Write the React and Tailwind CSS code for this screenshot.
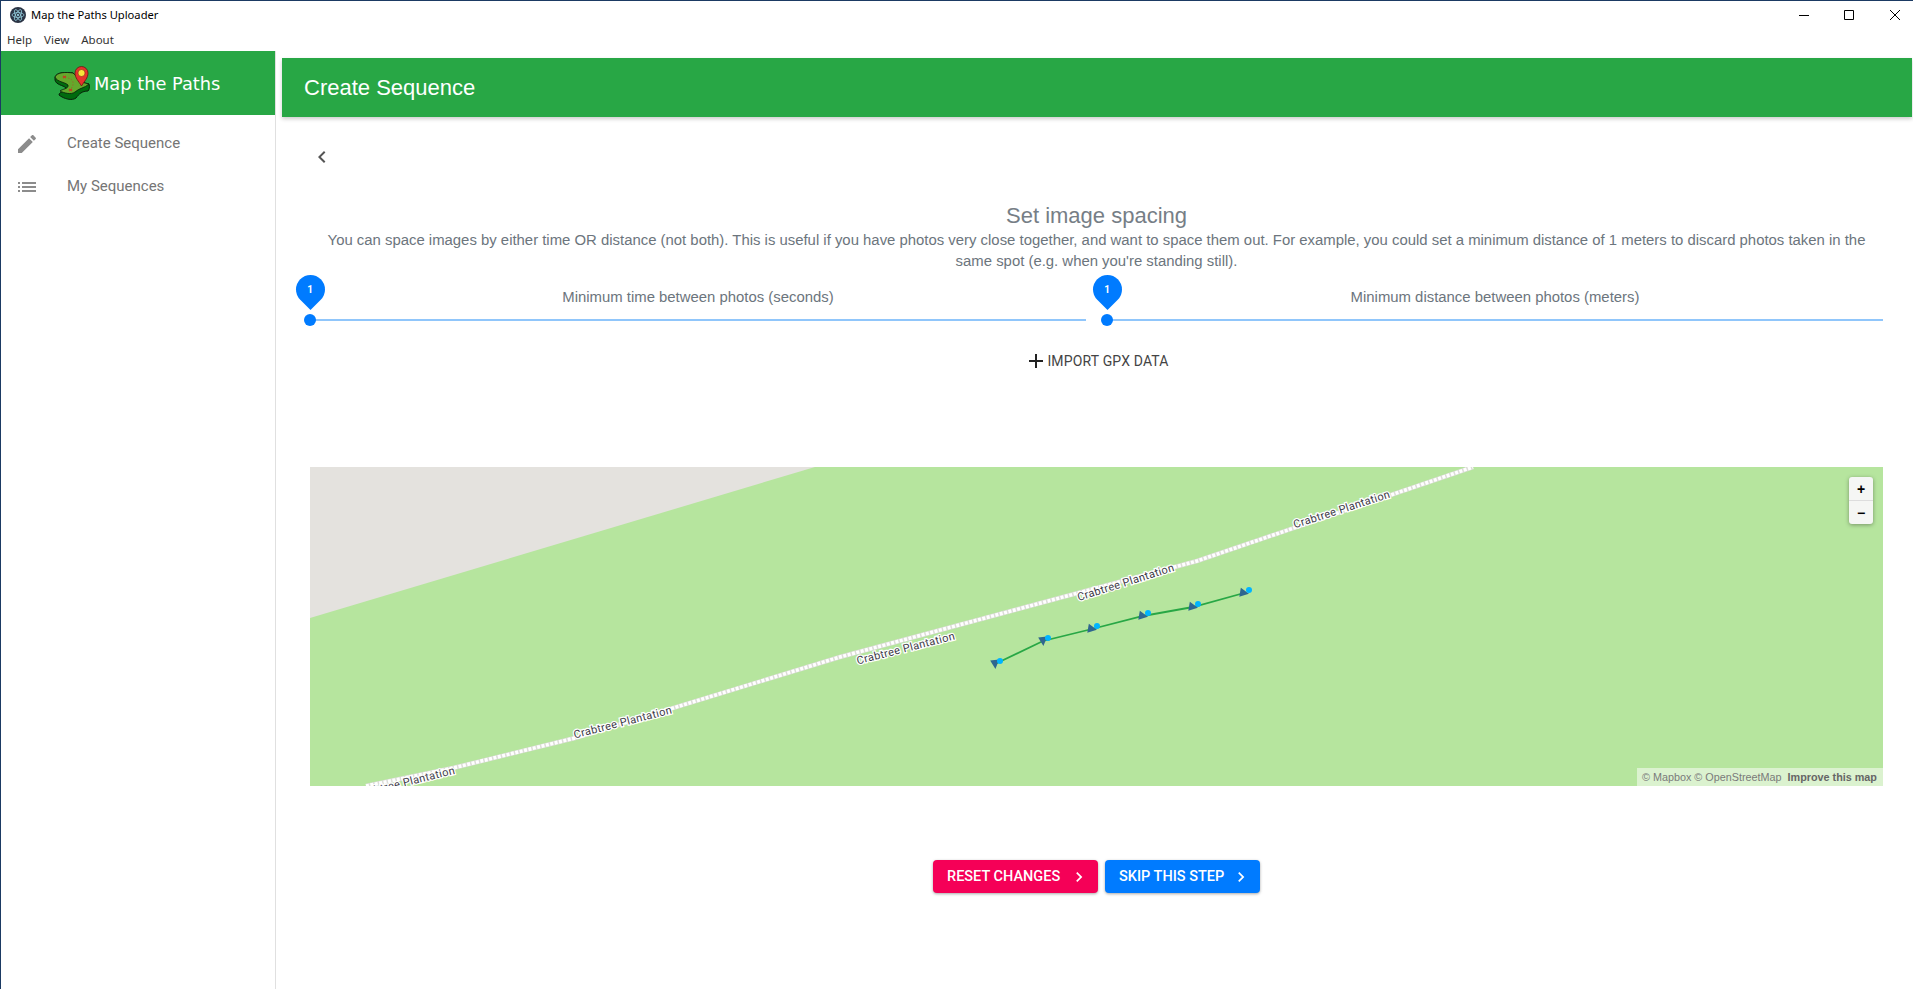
const sans = { fontFamily: '"Liberation Sans", Arial, sans-serif' };

function Icon({ d, size = 24, className = '' }) {
    return (
        <svg width={size} height={size} viewBox="0 0 24 24" fill="currentColor" className={className}>
            <path d={d} />
        </svg>
    );
}

const pencil = 'M3 17.25V21h3.75L17.81 9.94l-3.75-3.75L3 17.25zM20.71 7.04c.39-.39.39-1.02 0-1.41l-2.34-2.34c-.39-.39-1.02-.39-1.41 0l-1.83 1.83 3.75 3.75 1.83-1.83z';
const list = 'M3 13h2v-2H3v2zm0 4h2v-2H3v2zm0-8h2V7H3v2zm4 4h14v-2H7v2zm0 4h14v-2H7v2zM7 7v2h14V7H7z';
const chevronLeft = 'M15.41 7.41L14 6l-6 6 6 6 1.41-1.41L10.83 12z';
const chevronRight = 'M10 6L8.59 7.41 13.17 12l-4.58 4.59L10 18l6-6z';
const plus = 'M19 13h-6v6h-2v-6H5v-2h6V5h2v6h6v2z';

function TitleBar() {
    return (
        <div className="h-[50px] shrink-0 font-['Noto_Sans',sans-serif] text-black">
            <div className="flex h-[27px] items-center">
                <svg width="16" height="16" viewBox="0 0 16 16" className="ml-[9px]">
                    <circle cx="8" cy="8" r="8" fill="#2b3445" />
                    <g fill="none" stroke="#9fdcec" strokeWidth="0.7">
                        <ellipse cx="8" cy="8" rx="6" ry="2.4" />
                        <ellipse cx="8" cy="8" rx="6" ry="2.4" transform="rotate(60 8 8)" />
                        <ellipse cx="8" cy="8" rx="6" ry="2.4" transform="rotate(120 8 8)" />
                    </g>
                    <circle cx="8" cy="8" r="1.1" fill="#9fdcec" />
                </svg>
                <span className="ml-[5px] mt-[1px] text-[11.2px]">Map the Paths Uploader</span>
                <div className="ml-auto flex items-center text-black">
                    <svg width="10" height="10" viewBox="0 0 10 10" className="mr-[35px]"><path d="M0 5.5h10" stroke="currentColor" /></svg>
                    <svg width="10" height="10" viewBox="0 0 10 10" className="mr-[36px]"><path d="M.5.5h9v9h-9z" fill="none" stroke="currentColor" /></svg>
                    <svg width="10" height="10" viewBox="0 0 10 10" className="mr-[13px]"><path d="M0 0l10 10M10 0L0 10" stroke="currentColor" /></svg>
                </div>
            </div>
            <div className="flex h-[23px] items-center gap-[12px] pl-[6px] pt-[1px] text-[11.5px] text-[#333]">
                <span>Help</span>
                <span>View</span>
                <span>About</span>
            </div>
        </div>
    );
}

function Logo() {
    return (
        <svg width="36" height="36" viewBox="0 0 36 36" className="shrink-0">
            <path d="M1 12C3 7 12 7 19 8C24 12 24 17 35 19C36 22 35 25 34 26C28 26 25 29 22 33C18 36 10 34 5 30C5 26 13 27 12 23C9 20 2 20 1 15Z" fill="#006a0e" stroke="#08200a" strokeWidth="1" />
            <path d="M1 12C3 7 12 7 19 8C24 12 24 17 35 19C31 23 25 23 21 27C17 30 10 28 6 26C8 24 15 24 14 20C11 17 3 17 1 12Z" fill="#65a82c" stroke="#08200a" strokeWidth="0.8" />
            <path d="M9 11l3 2M12 11l-3 2M15 24l3 2M18 24l-3 2" stroke="#c23b22" strokeWidth="1.2" />
            <path d="M14 13c5 1 7 5 3 11" fill="none" stroke="#a5562a" strokeWidth="0.7" strokeDasharray="1.5 1.5" />
            <path d="M27.500 21C24.500 16 21 13 21 8A6.500 6.500 0 0 1 34 8C34 13 30.500 16 27.500 21Z" fill="#e5322c" stroke="#6b1410" strokeWidth="0.8" />
            <circle cx="27.500" cy="8" r="3.500" fill="#f7e43a" stroke="#6b1410" strokeWidth="0.5" />
        </svg>
    );
}

function Sidebar() {
    return (
        <aside className="w-[275px] shrink-0 border-r border-[#e0e0e0]">
            <div className="flex h-[64px] items-center bg-[#28a745] pl-[53px]">
                <Logo />
                <span className="ml-[4px] mt-[2px] font-['DejaVu_Sans',sans-serif] text-[17.8px] text-white">Map the Paths</span>
            </div>
            <nav className="pt-[7px] font-['Roboto',sans-serif] text-[15px] text-[#757575]">
                <div className="flex h-[43px] items-center pl-[14px]">
                    <Icon d={pencil} className="text-[#8c8c8c]" />
                    <span className="ml-[28px]">Create Sequence</span>
                </div>
                <div className="flex h-[43px] items-center pl-[14px]">
                    <Icon d={list} className="text-[#8c8c8c]" />
                    <span className="ml-[28px]">My Sequences</span>
                </div>
            </nav>
        </aside>
    );
}

function Slider({ label }) {
    return (
        <div className="relative h-[40px]">
            <p className="pt-[2px] text-center text-[14.9px] leading-[21px] text-[#6c757d]">{label}</p>
            <div className="absolute left-[5px] right-0 top-[34px] h-[2px] bg-[#90c6fb]" />
            <div className="absolute left-[-6px] top-[29px] h-[12px] w-[12px] rounded-full bg-[#007bff]" />
            <div className="absolute left-[-15px] top-[-11px] flex h-[30px] w-[30px] items-center justify-center">
                <div className="absolute h-[29px] w-[29px] rotate-45 rounded-[50%_50%_0_50%] bg-[#007bff]" />
                <span className="relative font-['Roboto',sans-serif] text-[10px] font-bold text-white">1</span>
            </div>
        </div>
    );
}

function MapLabel({ x, y, angle }) {
    return (
        <text
            x={x}
            y={y}
            transform={`rotate(${angle} ${x} ${y})`}
            textAnchor="middle"
            dominantBaseline="middle"
            fontFamily="Roboto, sans-serif"
            fontSize="11"
            letterSpacing="0.35"
            fill="#3d3a47"
            stroke="#ffffff"
            strokeWidth="2.500"
            paintOrder="stroke"
        >
            Crabtree Plantation
        </text>
    );
}

// x, y, rotation of the arrow marker
const line = [[685, 197, -5], [733, 174, -5], [782, 162, -80], [833, 149, -80], [883, 140, -80], [934, 126, -80]];

function MapDrawing() {
    const road = 'M56 319L143 301L265 271L530 190L887 94L1163 0';
    return (
        <svg width="1573" height="319" viewBox="0 0 1573 319" className="block">
            <rect width="1573" height="319" fill="#b6e59e" />
            <path d="M0 0H505L0 151Z" fill="#e4e2de" />
            <path d={road} fill="none" stroke="#dcdcd8" strokeWidth="4.500" />
            <path d={road} fill="none" stroke="#ffffff" strokeWidth="3.500" strokeDasharray="3 1.500" />
            <MapLabel x={96} y={316} angle={-14} />
            <MapLabel x={313} y={256} angle={-14.500} />
            <MapLabel x={596} y={182} angle={-14.500} />
            <MapLabel x={816} y={116} angle={-17.500} />
            <MapLabel x={1032} y={43} angle={-18} />
            <polyline points={line.map((p) => p[0] + ',' + p[1]).join(' ')} fill="none" stroke="#28a745" strokeWidth="1.800" />
            {line.map(([x, y, rot]) => (
                <g key={x}>
                    <path d="M-4.500 -4L4.500 -4L0 5Z" fill="#2f6690" transform={`translate(${x} ${y}) rotate(${rot})`} />
                    <circle cx={x + 5} cy={y - 3} r="3" fill="#00b4ff" />
                </g>
            ))}
        </svg>
    );
}

function MapPanel() {
    return (
        <div className="relative h-[319px] overflow-hidden">
            <MapDrawing />
            <div className="absolute right-[10px] top-[10px] w-[24px] rounded-[3px] bg-[#f5f6f4] shadow-[0_1px_4px_rgba(0,0,0,0.35)]">
                <div className="flex h-[24px] items-center justify-center border-b border-[#ddd] text-[14px] font-bold leading-none text-black">+</div>
                <div className="flex h-[23px] items-center justify-center text-[14px] font-bold leading-none text-black">−</div>
            </div>
            <div className="absolute bottom-0 right-0 flex h-[18px] w-[246px] items-center whitespace-nowrap bg-white/50 pl-[5px] text-[10.8px] text-[#7a7a7a]">
                © Mapbox © OpenStreetMap
                <span className="ml-[6px] font-bold text-[#666]">Improve this map</span>
            </div>
        </div>
    );
}

function ActionButton({ label, className }) {
    return (
        <button className={`flex h-[33px] items-center justify-between rounded-[4px] pl-[14px] pr-[9px] font-['Roboto',sans-serif] text-[14.5px] font-medium uppercase text-white shadow-[0_1px_3px_rgba(0,0,0,0.35)] ${className}`}>
            {label}
            <Icon d={chevronRight} size={20} />
        </button>
    );
}

export default function App() {
    return (
        <div className="flex h-[989px] w-[1913px] flex-col overflow-hidden border-l border-t border-[#1b3a63] bg-white" style={sans}>
            <TitleBar />
            <div className="flex min-h-0 flex-1">
                <Sidebar />
                <main className="min-w-0 flex-1 pl-[6px]">
                    <header className="mr-[1px] mt-[7px] flex h-[59px] items-center bg-[#28a745] pl-[22px] text-[22px] text-white shadow-[0_2px_4px_rgba(0,0,0,0.2)]">
                        Create Sequence
                    </header>
                    <div className="pl-[28px] pr-[30px]">
                        <div className="pt-[28px] text-[#555]">
                            <Icon d={chevronLeft} />
                        </div>
                        <h2 className="mt-[33px] text-center text-[22px] leading-[28px] text-[#767e86]">Set image spacing</h2>
                        <p className="text-center text-[14.9px] leading-[21px] text-[#6c757d]">
                            You can space images by either time OR distance (not both). This is useful if you have photos very close together, and want to space them out. For example, you could set a minimum distance of 1 meters to discard photos taken in the same spot (e.g. when you&#39;re standing still).
                        </p>
                        <div className="mt-[13px] grid grid-cols-2 gap-[21px]">
                            <Slider label="Minimum time between photos (seconds)" />
                            <Slider label="Minimum distance between photos (meters)" />
                        </div>
                        <div className="mt-[24px] flex items-center justify-center text-[#444]">
                            <Icon d={plus} className="text-[#222]" />
                            <span className="-ml-[1px] font-['Roboto',sans-serif] text-[14px] tracking-[0.16px]">IMPORT GPX DATA</span>
                        </div>
                        <div className="mt-[94px]">
                            <MapPanel />
                        </div>
                        <div className="mt-[74px] flex justify-center gap-[7px]">
                            <ActionButton label="Reset changes" className="w-[165px] bg-[#f50057]" />
                            <ActionButton label="Skip this step" className="w-[155px] bg-[#007bff]" />
                        </div>
                    </div>
                </main>
            </div>
        </div>
    );
}
